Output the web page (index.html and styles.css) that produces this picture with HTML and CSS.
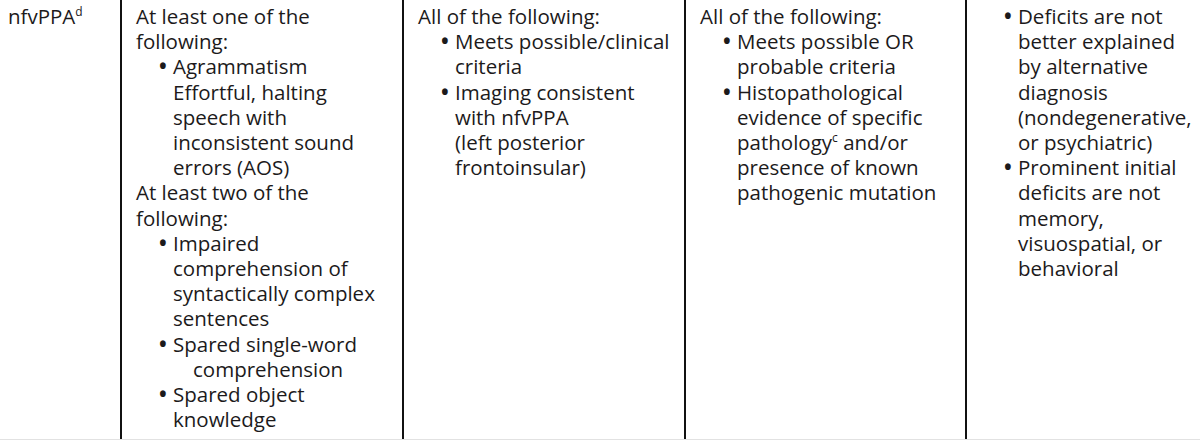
FILE: index.html
```html
<!DOCTYPE html>
<html>
<head>
<meta charset="utf-8">
<link rel="stylesheet" href="styles.css">
</head>
<body>
<div class="table">
  <div class="cell c1">nfvPPA<sup>d</sup></div>
  <div class="cell c2">
    <p>At least one of the following:</p>
    <ul>
      <li><span>Agrammatism<br>Effortful, halting speech with inconsistent sound errors (AOS)</span></li>
    </ul>
    <p>At least two of the following:</p>
    <ul>
      <li><span>Impaired comprehension of syntactically complex sentences</span></li>
      <li><span>Spared single-word<br><span class="extra">comprehension</span></span></li>
      <li><span>Spared object knowledge</span></li>
    </ul>
  </div>
  <div class="cell c3">
    <p>All of the following:</p>
    <ul>
      <li><span>Meets possible/clinical criteria</span></li>
      <li><span>Imaging consistent with nfvPPA<br>(left posterior frontoinsular)</span></li>
    </ul>
  </div>
  <div class="cell c4">
    <p>All of the following:</p>
    <ul>
      <li><span>Meets possible OR probable criteria</span></li>
      <li><span>Histopathological evidence of specific pathology<sup>c</sup> and/or presence of known pathogenic mutation</span></li>
    </ul>
  </div>
  <div class="cell c5">
    <ul>
      <li><span>Deficits are not better explained by alternative diagnosis (nondegenerative, or psychiatric)</span></li>
      <li><span>Prominent initial deficits are not memory, visuospatial, or behavioral</span></li>
    </ul>
  </div>
</div>
</body>
</html>
```

FILE: styles.css
```css
html, body {
  margin: 0;
  padding: 0;
  background: #ffffff;
}
body {
  font-family: "Open Sans", "Noto Sans", sans-serif;
  font-size: 20.5px;
  font-weight: 500;
  line-height: 25.2px;
  color: #1c1a1b;
  width: 1200px;
  height: 439px;
  overflow: hidden;
  border-bottom: 1px solid #e2e2e2;
}
.table {
  display: grid;
  grid-template-columns: 120px 282px 282px 281px 235px;
  min-height: 460px;
  border-top: 1px solid #e6e6e6;
  margin-top: -1px;
}
.cell {
  padding: 4px 8px 0 14px;
}
.c1 {
  padding-left: 8px;
}
.c2, .c3, .c4, .c5 {
  border-left: 2px solid #111111;
}
p {
  margin: 0;
}
ul {
  margin: 0;
  padding: 0 0 0 23px;
  list-style: none;
}
li {
  display: flex;
}
li::before {
  content: "\2022";
  flex: 0 0 14px;
  font-weight: 700;
}
.extra {
  padding-left: 20px;
}
sup {
  font-size: 12px;
  line-height: 0;
  vertical-align: 8px;
}
```
